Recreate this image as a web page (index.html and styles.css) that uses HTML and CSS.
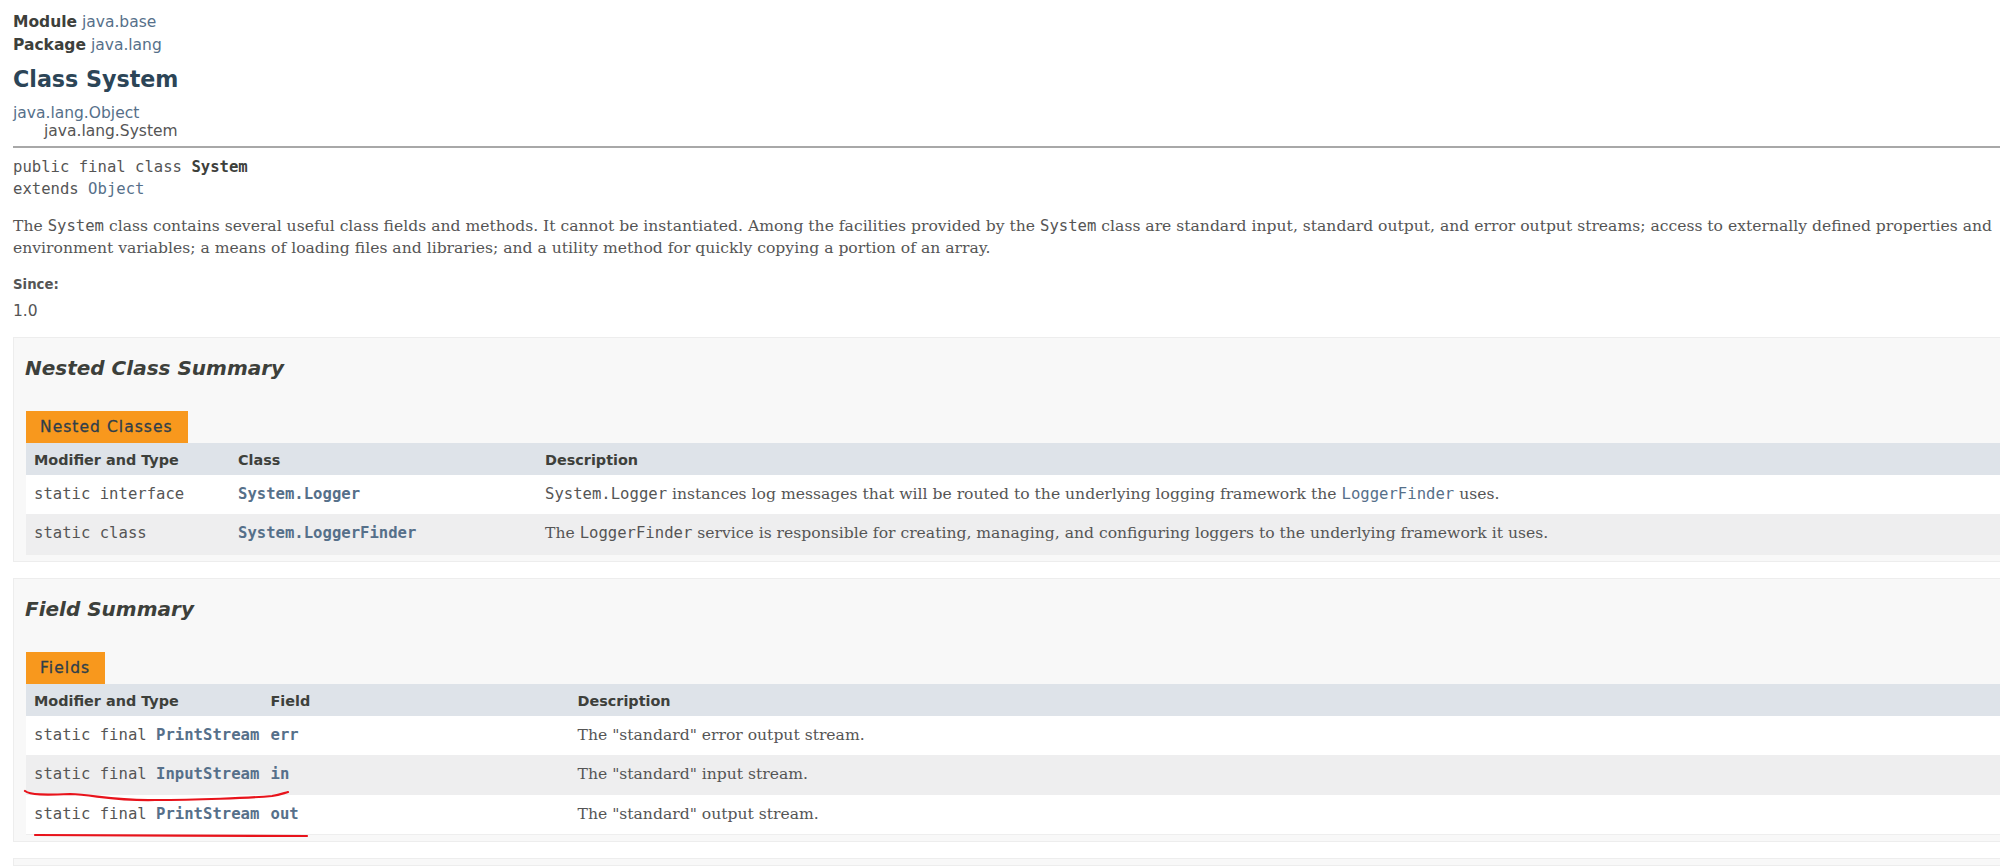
FILE: index.html
```html
<!DOCTYPE html>
<html lang="en">
<head>
<meta charset="utf-8">
<title>System (Java SE)</title>
<link rel="stylesheet" href="styles.css">
</head>
<body>
<main class="page">
  <div class="header">
    <div class="sub"><span class="label">Module</span> <a href="#">java.base</a></div>
    <div class="sub"><span class="label">Package</span> <a href="#">java.lang</a></div>
    <h1 class="title">Class System</h1>
  </div>
  <div class="inherit"><a href="#">java.lang.Object</a></div>
  <div class="inherit nested">java.lang.System</div>
  <hr class="rule">
  <div class="signature">public final class <b class="sig-name">System</b><br>extends <a href="#">Object</a></div>
  <div class="block">The <code>System</code> class contains several useful class fields and methods. It cannot be instantiated. Among the facilities provided by the <code>System</code> class are standard input, standard output, and error output streams; access to externally defined properties and environment variables; a means of loading files and libraries; and a utility method for quickly copying a portion of an array.</div>
  <div class="since-label">Since:</div>
  <div class="since-value">1.0</div>

  <section class="summary">
    <h2 class="summary-title">Nested Class Summary</h2>
    <div class="caption">Nested Classes</div>
    <div class="table nested-table">
      <div class="cell head">Modifier and Type</div><div class="cell head">Class</div><div class="cell head">Description</div>
      <div class="cell"><code>static interface</code></div><div class="cell"><a class="member" href="#">System.Logger</a></div><div class="cell desc"><code>System.Logger</code> instances log messages that will be routed to the underlying logging framework the <a class="code-link" href="#">LoggerFinder</a> uses.</div>
      <div class="cell alt"><code>static class</code></div><div class="cell alt"><a class="member" href="#">System.LoggerFinder</a></div><div class="cell alt desc">The <code>LoggerFinder</code> service is responsible for creating, managing, and configuring loggers to the underlying framework it uses.</div>
    </div>
  </section>

  <section class="summary">
    <h2 class="summary-title">Field Summary</h2>
    <div class="caption">Fields</div>
    <div class="table field-table">
      <div class="cell head">Modifier and Type</div><div class="cell head">Field</div><div class="cell head">Description</div>
      <div class="cell"><code>static final <a href="#">PrintStream</a></code></div><div class="cell"><a class="member" href="#">err</a></div><div class="cell desc">The "standard" error output stream.</div>
      <div class="cell alt"><code>static final <a href="#">InputStream</a></code></div><div class="cell alt"><a class="member" href="#">in</a></div><div class="cell alt desc">The "standard" input stream.</div>
      <div class="cell"><code>static final <a href="#">PrintStream</a></code></div><div class="cell"><a class="member" href="#">out</a></div><div class="cell desc">The "standard" output stream.</div>
    </div>
  </section>

  <section class="summary"></section>
</main>
<svg class="ink" width="2000" height="866" viewBox="0 0 2000 866" aria-hidden="true">
  <path d="M25 791C30 795 45 795 70 794C95 795 115 801 155 800C195 800 250 798 272 796C280 795 284 793 288 792"/>
  <path d="M35 835C100 835 230 836 307 836"/>
</svg>
</body>
</html>
```
FILE: styles.css
```css
html, body {
  margin: 0;
  padding: 0;
  background: #fff;
  overflow: hidden;
  height: 866px;
}
body {
  position: relative;
  width: 2000px;
  font-family: "DejaVu Sans", sans-serif;
  font-size: 15.5px;
  color: #3d403b;
}
a { color: #56708a; text-decoration: none; }
code, .signature, .member, .code-link { font-family: "DejaVu Sans Mono", monospace; font-size: 15.6px; }
.page { width: 2040px; padding: 13px 0 0 13px; }
.sub { height: 23px; line-height: 18px; }
.label { font-weight: bold; }
.title { margin: 7.5px 0 13px; font-size: 22.2px; line-height: 24px; color: #2c4557; font-weight: bold; }
.inherit { line-height: 18px; height: 18px; }
.nested { padding-left: 31px; color: #555; }
.rule { height: 2px; margin: 6px 0 8px; border: 0; background: #a8a8a8; }
.signature { line-height: 22px; color: #555; margin-bottom: 15px; }
.sig-name { color: #3d403b; }
.block { font-family: "DejaVu Serif", serif; font-size: 15.6px; line-height: 22px; color: #555; width: 1990px; }
.block code, .desc code { color: #555; }
.since-label { font-size: 13.3px; font-weight: bold; line-height: 16px; margin-top: 18px; color: #555; }
.since-value { line-height: 18px; margin-top: 9px; color: #555; }
.summary { background: #f8f8f8; border: 1px solid #ededed; padding: 0 0 6px 12px; margin-top: 16px; box-sizing: border-box; }
.since-value + .summary { margin-top: 17px; }
.summary-title { margin: 0 0 0 -1px; padding-top: 18px; height: 55px; font-size: 20px; line-height: 24px; font-style: italic; font-weight: bold; color: #3d403b; box-sizing: content-box; }
.caption { display: inline-block; background: #f8981d; color: #2f3e4b; padding: 0 15px 0 14px; height: 32px; line-height: 32px; font-size: 15.5px; letter-spacing: 1.05px; -webkit-text-stroke: 0.3px #2f3e4b; vertical-align: top; }
.table { display: grid; border-bottom: 1px solid #eee; }
.nested-table { grid-template-columns: 204px 307px 1fr; }
.field-table { grid-template-columns: 236.5px 307px 1fr; }
.cell { padding: 0 8px; background: #fff; height: 39.5px; line-height: 38px; white-space: nowrap; }
.cell code { color: #555; }
.head { background: #dee3e9; height: 32px; line-height: 34px; font-size: 14.4px; font-weight: bold; }
.alt { background: #eeeeef; }
.desc { font-family: "DejaVu Serif", serif; font-size: 15.6px; color: #555; }
.member { font-weight: bold; }
.cell code a { font-weight: bold; }
.ink { position: absolute; left: 0; top: 0; pointer-events: none; }
.ink path { fill: none; stroke: #e8131b; stroke-width: 2.2; stroke-linecap: round; }
```
